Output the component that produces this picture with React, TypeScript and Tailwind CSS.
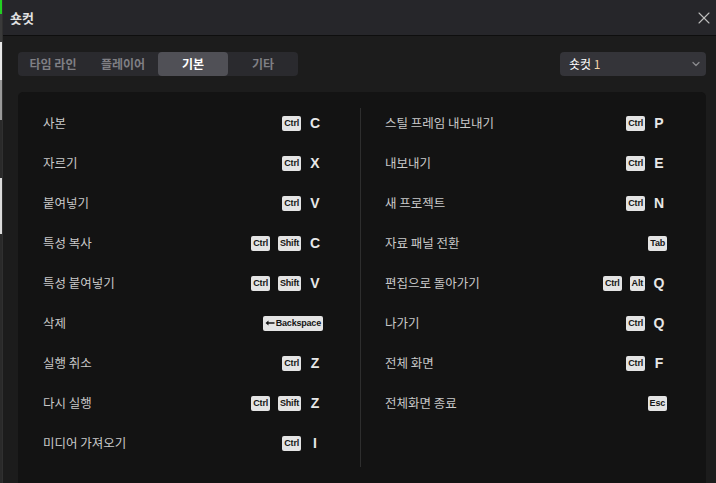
import { X, ChevronDown } from "lucide-react";

const leftRows = [
  { label: "사본", mods: ["Ctrl"], key: "C" },
  { label: "자르기", mods: ["Ctrl"], key: "X" },
  { label: "붙여넣기", mods: ["Ctrl"], key: "V" },
  { label: "특성 복사", mods: ["Ctrl", "Shift"], key: "C" },
  { label: "특성 붙여넣기", mods: ["Ctrl", "Shift"], key: "V" },
  { label: "삭제", mods: ["Backspace"], key: "" },
  { label: "실행 취소", mods: ["Ctrl"], key: "Z" },
  { label: "다시 실행", mods: ["Ctrl", "Shift"], key: "Z" },
  { label: "미디어 가져오기", mods: ["Ctrl"], key: "I" },
];

const rightRows = [
  { label: "스틸 프레임 내보내기", mods: ["Ctrl"], key: "P" },
  { label: "내보내기", mods: ["Ctrl"], key: "E" },
  { label: "새 프로젝트", mods: ["Ctrl"], key: "N" },
  { label: "자료 패널 전환", mods: ["Tab"], key: "" },
  { label: "편집으로 돌아가기", mods: ["Ctrl", "Alt"], key: "Q" },
  { label: "나가기", mods: ["Ctrl"], key: "Q" },
  { label: "전체 화면", mods: ["Ctrl"], key: "F" },
  { label: "전체화면 종료", mods: ["Esc"], key: "" },
];

const tabs = ["타임 라인", "플레이어", "기본", "기타"];

const kr = { fontFamily: '"Noto Sans CJK KR", "Noto Sans", sans-serif' };
const latin = { fontFamily: '"Liberation Sans", Arial, sans-serif' };

function Badge({ text }: { text: string }) {
  return (
    <span
      className="h-[15px] px-[2px] rounded-[2px] bg-[#e4e4e4] text-[#151515] text-[9px] font-bold leading-[15px] tracking-[-0.2px] flex items-center"
      style={latin}
    >
      {text === "Backspace" && (
        <svg width="10" height="6" viewBox="0 0 10 6" className="mr-[1px]">
          <path d="M0.5 3 L3.5 0.5 L3.5 2.2 L9.5 2.2 L9.5 3.8 L3.5 3.8 L3.5 5.5 Z" fill="#151515" />
        </svg>
      )}
      {text}
    </span>
  );
}

function Row({ row }: { row: any }) {
  return (
    <div className="h-[30px] flex items-center justify-between">
      <span className="text-[12.5px] text-[#c9c9c9]" style={kr}>
        {row.label}
      </span>
      <div className="flex items-center gap-[8px]">
        {row.mods.map((m: string) => (
          <Badge key={m} text={m} />
        ))}
        {row.key && (
          <span
            className="w-[16px] -ml-[2px] text-center text-[14px] font-bold text-[#e8e8e8]"
            style={latin}
          >
            {row.key}
          </span>
        )}
      </div>
    </div>
  );
}

export default function App() {
  return (
    <div className="w-[716px] h-[483px] overflow-hidden flex bg-[#1c1c1c]">
      {/* background app peeking on the left */}
      <div className="w-[2px] shrink-0 flex flex-col">
        <div className="h-[14px] bg-[#22d022]" />
        <div className="h-[28px] bg-[#3a3a3a]" />
        <div className="h-[38px] bg-[#e8e8e8]" />
        <div className="h-[40px] bg-[#9a9a9a]" />
        <div className="h-[58px] bg-[#2a2a2a]" />
        <div className="h-[56px] bg-[#dcdcdc]" />
        <div className="flex-1 bg-[#2a2a2a]" />
      </div>
      <div className="flex-1 min-w-0 flex flex-col border-l border-[#303030]">
        <div className="h-[36px] shrink-0 bg-[#26262a] border-b border-[#0e0e0e] flex items-center justify-between pl-[7px] pr-[2px]">
          <span className="text-[13px] text-[#e2e2e2] font-bold" style={kr}>
            숏컷
          </span>
          <X className="w-[20px] h-[20px] text-[#bdbdbd]" strokeWidth={1.3} />
        </div>
        <div className="flex-1 pl-[15px] pr-[10px] pt-[16px] flex flex-col">
          <div className="flex items-center justify-between">
            <div className="flex h-[24px] rounded-[4px] bg-[#2a2a2e]">
              {tabs.map((t) => (
                <div
                  key={t}
                  className={
                    t === "기본"
                      ? "w-[70px] flex items-center justify-center rounded-[4px] bg-[#505056] text-white text-[12px] font-bold"
                      : "w-[70px] flex items-center justify-center text-[#7f7f84] text-[12px] font-bold"
                  }
                  style={kr}
                >
                  {t}
                </div>
              ))}
            </div>
            <div className="w-[146px] h-[24px] rounded-[4px] bg-[#343439] flex items-center justify-between pl-[9px] pr-[4px]">
              <span className="text-[12px] text-white" style={kr}>
                숏컷 <span className="text-[#f3d3a8]">1</span>
              </span>
              <ChevronDown className="w-[12px] h-[12px] text-[#8a8a8e]" strokeWidth={2.5} />
            </div>
          </div>
          <div className="mt-[16px] flex-1 rounded-t-[5px] bg-[#131313] pt-[16px] flex items-start">
            <div className="w-[343px] shrink-0 pl-[25px] pr-[37px] pb-[9px] flex flex-col gap-[10px] border-r border-[#2e2e2e]">
              {leftRows.map((r) => (
                <Row key={r.label} row={r} />
              ))}
            </div>
            <div className="w-[343px] shrink-0 pl-[24px] pr-[37px] flex flex-col gap-[10px]">
              {rightRows.map((r) => (
                <Row key={r.label} row={r} />
              ))}
            </div>
          </div>
        </div>
      </div>
    </div>
  );
}
